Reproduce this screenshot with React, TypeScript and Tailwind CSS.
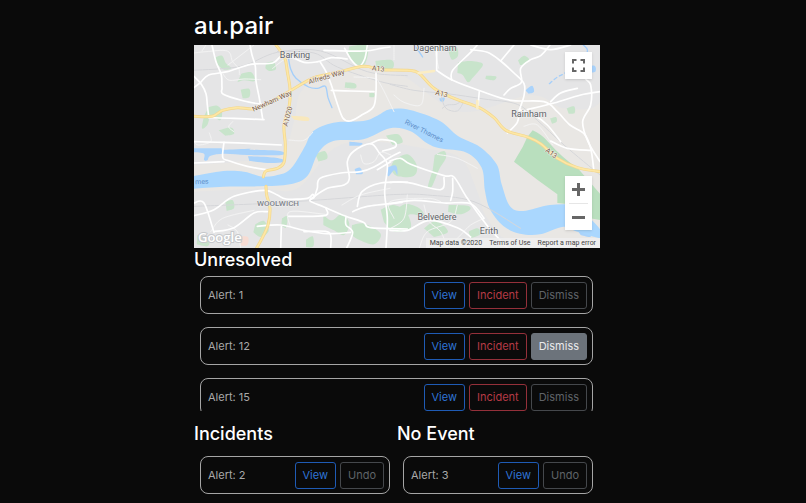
import { useState } from 'react'

type Point = [number, number]

// Turns "x,y x,y ..." into a smooth path through every point
function smooth(list: string, closed = false) {
  const p = list.split(' ').map((s) => s.split(',').map(Number) as Point)
  let d = `M${p[0][0]} ${p[0][1]}`
  for (let i = 0; i < p.length - 1; i++) {
    const a = p[i - 1] || p[i]
    const b = p[i]
    const c = p[i + 1]
    const e = p[i + 2] || c
    d += `C${b[0] + (c[0] - a[0]) / 6} ${b[1] + (c[1] - a[1]) / 6} ${c[0] - (e[0] - b[0]) / 6} ${c[1] - (e[1] - b[1]) / 6} ${c[0]} ${c[1]}`
  }
  return closed ? d + 'Z' : d
}

const urban = [
  '0,0 560,0 820,0 1218,0 1218,170 1110,190 1010,150 800,200 620,90 470,70 330,130 300,230 260,330 130,350 0,360',
  '0,440 190,430 310,430 420,310 540,290 690,310 800,340 850,440 880,520 960,590 1218,590 1218,609 0,609',
]

const parks = [
  '62,38 84,32 96,55 112,70 90,74 72,60',
  '142,86 172,82 182,108 150,106 130,112',
  '216,54 238,50 246,72 226,78 214,70',
  '140,134 166,132 166,156 146,160',
  '44,186 70,182 84,200 78,226 52,210 40,240 24,250 30,214',
  '466,4 520,2 512,58 480,54 462,24',
  '544,48 594,46 594,72 548,70',
  '454,112 484,116 484,130 452,128',
  '526,144 540,144 540,156 526,156',
  '792,52 828,48 866,56 854,78 836,98 822,112 806,90 790,84',
  '764,4 788,6 792,32 774,44 764,22',
  '876,92 906,94 900,106 874,102',
  '972,46 990,32 1006,44 994,58 978,60',
  '1118,190 1140,184 1142,204 1124,206',
  '1068,220 1086,216 1088,230 1074,236',
  '722,330 750,318 756,338 736,372 714,424 702,424 716,376',
  '600,345 640,328 668,360 660,392 610,394 588,370',
  '588,510 632,478 676,490 690,514 650,508 620,524 588,526',
  '764,480 820,482 828,494 798,508 762,500',
  '690,550 726,528 762,560 720,576',
  '824,560 850,550 862,566 830,580',
  '388,510 414,526 444,506 466,536 450,570 420,556 388,540',
  '474,540 512,536 560,566 540,598 498,586 472,570',
  '560,494 598,480 636,500 650,548 602,560 570,532',
  '184,538 210,528 224,558 200,576 178,562',
  '94,470 116,466 120,490 98,498',
  '264,520 280,514 276,548 262,540',
  '336,584 356,574 358,604 336,606',
  '74,256 112,248 120,266 94,272',
  '364,328 392,318 400,340 374,350',
  '576,272 612,268 626,292 596,300',
  '10,570 44,588 40,604 8,598',
]

const marshes = 'M1000 276L1016 256Q1040 266 1062 290Q1106 340 1150 368L1218 446V525L1188 520L1148 480L1090 474V448L1030 404L960 350L986 306Z'

const river =
  '0,393 88,378 150,380 208,395 260,388 290,371 315,335 335,300 358,258 418,233 508,228 550,212 588,193 648,195 738,228 793,274 858,306 908,358 923,418 948,484 988,498 1068,480 1148,483 1188,520 1218,553 1225,580 1150,560 1108,545 1038,568 978,566 928,543 888,493 873,438 863,368 818,323 738,310 698,294 648,258 588,250 508,283 418,288 373,323 340,393 288,418 198,424 88,425 0,431'

const waters = [
  '0,310 78,310 88,314 168,311 170,314 258,318 262,330 160,330 92,326 50,332 40,346 30,344 30,326 0,322',
  '162,334 220,336 264,342 266,352 220,354 166,348',
  '466,290 504,294 496,302 466,302',
  '482,372 498,368 506,386 486,388',
  '580,368 606,362 610,390 600,376 584,394 578,384',
  '994,136 1014,122 1020,140 1004,146',
  '1176,64 1202,62 1204,80 1184,82',
  '736,160 752,158 748,170 738,168',
  '1140,540 1180,545 1190,575 1160,570',
]

const streams = [
  '282,30 290,72 306,100 344,126 370,130 394,124 402,158 414,188',
  '1168,0 1180,14 1176,36 1164,60',
  '660,0 674,18 686,36',
]

const rails = [
  '0,76 140,64 250,22 380,18 520,80 640,92',
  '588,118 660,136 760,146 870,162 970,178 1030,226 1110,300 1218,390',
  '250,20 360,24 430,66 560,110 640,124',
  '0,484 200,476 360,466 520,454 620,448 700,450 840,470 980,550',
  '745,190 760,180 786,178 804,166',
  '742,156 756,190 790,198 808,172',
]

const lanes = [
  '0,24 36,20 100,18 116,50 134,70 136,88',
  '24,18 36,0',
  '88,88 106,106 150,102 200,104',
  '102,60 180,0',
  '236,70 280,40 320,50',
  '600,200 560,120 540,100 480,96',
  '600,44 600,0',
  '734,70 726,30 724,0',
  '690,130 680,180 630,172 600,150',
  '0,288 12,300 50,290 46,264',
  '120,260 104,246 116,230',
  '284,285 330,286 356,262',
  '500,330 510,356 540,350 560,322 590,330',
  '140,609 130,560 102,540',
  '50,560 86,520 180,496',
  '288,542 288,500 392,508',
  '444,480 500,450 588,430',
  '600,520 588,470 700,460 740,470',
  '760,609 740,560 706,530 690,480',
  '790,480 770,530 700,560 676,609',
  '640,450 630,520 590,550',
  '870,520 830,540 800,570 770,600',
  '990,244 1030,240 1076,300',
  '850,370 790,340 730,328',
]

const streets = [
  '0,128 20,112 44,90 100,80 170,58 236,54 272,28 330,52 372,50 412,38 460,42',
  '0,94 22,118 36,146 40,180 44,216',
  '54,0 66,50 82,90 84,128 88,148 150,168 204,178',
  '168,0 174,30 184,64 186,108 196,160 206,222',
  '44,218 120,220 210,224',
  '378,50 396,80 412,120 428,170 446,218 468,228 500,212 538,186 546,140 546,84',
  '412,136 470,138 540,140',
  '452,10 470,42 494,64 512,42 520,0',
  '588,6 560,10 510,18 390,16',
  '0,290 84,292 180,296 262,300',
  '90,292 86,336 100,346 160,364 216,374',
  '0,354 90,350',
  '0,474 30,474 60,562',
  '0,512 60,494 120,454 210,436 250,450 276,462 340,460 356,448 360,458 348,468 390,486 452,512 508,532 530,548 640,552',
  '362,454 370,430 378,400 440,384 500,380 540,366 590,336 618,322',
  '350,462 400,430 450,420 466,400 460,350 480,318 530,296 556,324 580,360 572,440 580,520 576,609',
  '530,296 560,284 600,290 604,306 566,318',
  '190,544 260,540 330,556 400,566 470,562',
  '262,545 260,609',
  '396,490 392,512 284,514',
  '456,516 456,540 476,562 458,609',
  '60,560 120,548 180,504 220,500',
  '330,560 404,562 410,609',
  '476,500 520,484 624,472',
  '490,484 504,440 560,414 640,412',
  '588,348 620,340 650,358 750,392 780,396 820,460 878,540 910,576 940,609',
  '588,412 640,412 740,434 750,398',
  '776,400 776,440 770,466',
  '588,476 660,466 750,474 830,476 870,520',
  '588,556 640,556 706,526 790,548 830,576',
  '550,374 590,350',
  '773,105 776,76 830,22 850,0',
  '728,76 776,106 860,138 950,166 1050,170 1090,200 1128,240 1170,266 1190,310 1200,380',
  '728,76 728,0',
  '856,138 852,184',
  '830,14 880,22 920,48 960,84 990,116 990,152 976,196 970,232 940,264',
  '920,48 960,0',
  '930,150 950,130 982,112 980,70 1010,44 1040,32 1068,0',
  '1000,194 1080,174 1160,150 1218,140',
  '1162,60 1174,100 1190,120 1190,180 1166,230 1182,290 1218,350',
  '976,194 1020,210 1060,240 1100,290',
  '1070,170 1100,144 1150,130',
  '1010,0 1070,14 1130,0',
  '1070,288 1120,310 1190,316',
]

const highways = [
  '0,214 54,214 86,196 130,188 190,190 260,154 298,132 360,98 430,82 510,64 560,74 640,76 674,84 720,130 780,160 856,188 900,218 936,256 1000,276 1040,296 1090,340 1150,368 1218,380',
  '246,0 272,38 280,80 288,132 286,180 270,240 274,300 270,352 250,370 216,378 208,396',
  '216,424 218,450 228,490 222,540 204,580 188,609',
]

const outline = { paintOrder: 'stroke', stroke: '#f0f0f0', strokeWidth: 1, strokeLinejoin: 'round' } as const

function MapDrawing() {
  return (
    <svg viewBox="0 0 406 203" preserveAspectRatio="xMidYMid slice" className="block h-full w-full font-['Roboto',sans-serif]" role="img" aria-label="Map">
      <rect width="406" height="203" fill="#e9e7e4" />
      <g transform="scale(0.33333)" fill="none" strokeLinecap="round" strokeLinejoin="round">
        {urban.map((d) => <path key={d} d={smooth(d, true)} fill="#e5e5e6" />)}
        {parks.map((d) => <path key={d} d={smooth(d, true)} fill="#c8e4cb" />)}
        <path d={marshes} fill="#b9dfbe" />
        <path d={smooth('290,212 340,216 342,228 300,224', true)} fill="#f8e8bd" />
        <path d={smooth('140,574 162,576 160,600 138,602', true)} fill="#f7dcd3" />
        {waters.map((d) => <path key={d} d={smooth(d, true)} fill="#aad3fb" />)}
        <path d={smooth(river, true)} fill="#aad7fe" />
        {streams.map((d) => <path key={d} d={smooth(d)} stroke="#a5cffa" strokeWidth="4" />)}
        <path d={smooth('1066,116 1080,104 1094,94 1110,86 1134,68 1144,48')} stroke="#a5cffa" strokeWidth="4" strokeDasharray="10 9" />
        {rails.map((d) => <path key={d} d={smooth(d)} stroke="#d6d7da" strokeWidth="3" />)}
        {lanes.map((d) => <path key={d} d={smooth(d)} stroke="#f3f3f3" strokeWidth="3" />)}
        {streets.map((d) => <path key={d} d={smooth(d)} stroke="#ffffff" strokeWidth="5" />)}
        {highways.map((d) => <path key={d} d={smooth(d)} stroke="#f3d78e" strokeWidth="9" />)}
        {highways.map((d) => <path key={d} d={smooth(d)} stroke="#fde7a5" strokeWidth="5" />)}
        <path d="M674 84L720 78M850 168v22" stroke="#fbedc4" strokeWidth="8" />
      </g>
      <g fill="#5f6368" fontSize="9" textAnchor="middle" {...outline}>
        <text x="101" y="13">Barking</text>
        <text x="241" y="6">Dagenham</text>
        <text x="335" y="72">Rainham</text>
        <text x="243" y="175">Belvedere</text>
        <text x="295" y="189">Erith</text>
        <text x="84" y="161" fontSize="8" fontWeight="500" fill="#80848c">WOOLWICH</text>
      </g>
      <g fill="#7b5b3e" fontSize="7" textAnchor="middle" {...outline}>
        <text transform="translate(133 34) rotate(-16)">Alfreds Way</text>
        <text transform="translate(79 58) rotate(-24)">Newham Way</text>
        <text transform="translate(96 72) rotate(-76)">A1020</text>
        <text transform="translate(184 26) rotate(6)">A13</text>
        <text transform="translate(247 51) rotate(12)">A13</text>
        <text transform="translate(356 110) rotate(36)">A13</text>
      </g>
      <g fill="#5f8fc9" fontSize="7" textAnchor="middle">
        <text transform="translate(229 88) rotate(27)">River Thames</text>
        <text transform="translate(8 139) rotate(-3)">mes</text>
      </g>
      <text x="4" y="197" fontSize="13" fontWeight="600" fill="#ffffff" stroke="#c6c8cb" strokeWidth="2" paintOrder="stroke" className="font-['Open_Sans',sans-serif]">Google</text>
    </svg>
  )
}

function AlertMap() {
  return (
    <div className="relative h-[203px] overflow-hidden bg-[#e9e7e4]">
      <MapDrawing />
      <button type="button" aria-label="Toggle fullscreen" className="absolute top-[7px] right-2 flex size-[27px] items-center justify-center bg-white shadow-sm">
        <svg viewBox="0 0 13 13" className="size-[13px]" fill="none" stroke="#666666" strokeWidth="2">
          <path d="M1 4.500V1h3.500M8.500 1H12v3.500M12 8.500V12H8.500M4.500 12H1V8.500" />
        </svg>
      </button>
      <div className="absolute right-2 bottom-[18px] flex w-[27px] flex-col bg-white shadow-sm">
        <button type="button" aria-label="Zoom in" className="flex h-[27px] items-center justify-center">
          <svg viewBox="0 0 13 13" className="size-[13px]" stroke="#666666" strokeWidth="3">
            <path d="M6.500 0v13M0 6.500h13" />
          </svg>
        </button>
        <hr className="mx-1 border-[#e6e6e6]" />
        <button type="button" aria-label="Zoom out" className="flex h-[26px] items-center justify-center">
          <svg viewBox="0 0 13 13" className="size-[13px]" stroke="#666666" strokeWidth="3">
            <path d="M0 6.500h13" />
          </svg>
        </button>
      </div>
      <div className="absolute right-0 bottom-0 flex h-[10px] items-center gap-[7px] bg-[#f0f0f0]/80 px-1 font-['Roboto',sans-serif] text-[7px] leading-[10px] text-[#444444]">
        <span>Map data ©2020</span>
        <a href="#terms">Terms of Use</a>
        <a href="#report">Report a map error</a>
      </div>
    </div>
  )
}

const buttonStyles = {
  primary: 'border-[#1f5bb5] text-[#2f74d6]',
  danger: 'border-[#94303a] text-[#b63a46]',
  secondary: 'border-[#45484c] text-[#5f6368]',
  active: 'border-[#6c737b] bg-[#6c737b] text-[#e9eaec]',
}

function ActionButton({ label, variant, onClick }: { label: string; variant: keyof typeof buttonStyles; onClick?: () => void }) {
  return (
    <button type="button" onClick={onClick} className={`h-[27px] rounded-[3px] border px-[7px] text-[11px] leading-4 ${buttonStyles[variant]}`}>
      {label}
    </button>
  )
}

function AlertCard({ id, children }: { id: number; children: React.ReactNode }) {
  return (
    <li className="flex h-[38px] shrink-0 items-center justify-between rounded-lg border border-[#a5a5a5] pr-[5px] pl-[7px]">
      <span className="text-[11px] leading-4 text-[#a9a9a9]">Alert: {id}</span>
      <div className="flex gap-1">{children}</div>
    </li>
  )
}

function ResolvedColumn({ title, id }: { title: string; id: number }) {
  return (
    <section className="flex-1">
      <h2 className="text-[18px] leading-6 font-medium">{title}</h2>
      <ul className="mt-[10px] pr-[7px] pl-[6px]">
        <AlertCard id={id}>
          <ActionButton label="View" variant="primary" />
          <ActionButton label="Undo" variant="secondary" />
        </AlertCard>
      </ul>
    </section>
  )
}

export default function App() {
  const [selected, setSelected] = useState(12)

  return (
    <main className="min-h-screen bg-[#0a0a0a] pr-3 font-['Inter',sans-serif] text-white">
      <div className="mx-auto w-full max-w-[406px] pt-[10px]">
        <h1 className="mb-[3px] text-[24px] leading-8 font-medium">au.pair</h1>
        <AlertMap />

        <section>
          <h2 className="text-[18px] leading-6 font-medium">Unresolved</h2>
          <ul className="mt-1 flex h-[135px] flex-col gap-[13px] overflow-hidden pr-[7px] pl-[6px]">
            {[1, 12, 15].map((id) => (
              <AlertCard key={id} id={id}>
                <ActionButton label="View" variant="primary" />
                <ActionButton label="Incident" variant="danger" />
                <ActionButton label="Dismiss" variant={selected === id ? 'active' : 'secondary'} onClick={() => setSelected(id)} />
              </AlertCard>
            ))}
          </ul>
        </section>

        <div className="mt-[11px] flex pb-2">
          <ResolvedColumn title="Incidents" id={2} />
          <ResolvedColumn title="No Event" id={3} />
        </div>
      </div>
    </main>
  )
}
